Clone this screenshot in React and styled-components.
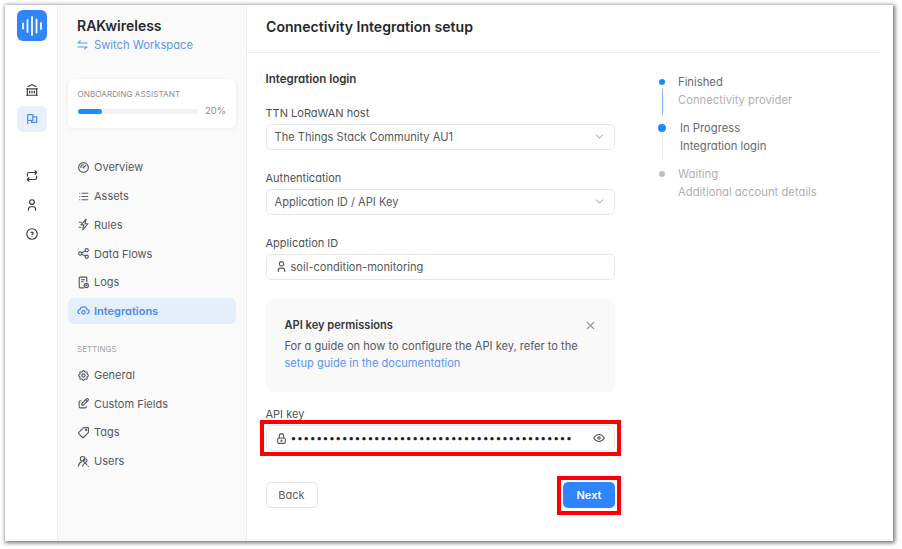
import styled, { createGlobalStyle } from "styled-components";
import {
  TbBuildingBank,
  TbRepeat,
  TbUser,
  TbHelpCircle,
  TbGauge,
  TbList,
  TbShare,
  TbSettings,
  TbEdit,
  TbChevronDown,
  TbLock,
  TbEye,
  TbX,
} from "react-icons/tb";

const GlobalStyle = createGlobalStyle`
  html, body {
    margin: 0;
    background: #fff;
    font-family: Inter, "Liberation Sans", sans-serif;
    font-feature-settings: "cv11" 1;
  }
  * { box-sizing: border-box; }
`;

const Page = styled.div`
  width: 902px;
  height: 549px;
  padding: 5px 0 0 5px;
  overflow: hidden;
`;

const Frame = styled.div`
  display: flex;
  width: 888px;
  height: 536px;
  background: #fff;
  box-shadow: 1px 1px 4px 1px rgba(0, 0, 0, 0.55);
`;

const Rail = styled.nav`
  display: flex;
  flex-direction: column;
  align-items: center;
  width: 53px;
  padding: 5px 0 0 1px;
  border-right: 1px solid #ededed;
`;

const Logo = styled.div`
  display: flex;
  align-items: center;
  justify-content: center;
  width: 30px;
  height: 31px;
  margin-bottom: 36px;
  border-radius: 6px;
  background: #2f84ff;
`;

const RailButton = styled.div`
  display: flex;
  align-items: center;
  justify-content: center;
  width: 30px;
  height: 26px;
  margin-bottom: ${(p) => p.$gap || 3}px;
  border-radius: 6px;
  color: ${(p) => (p.$active ? "#4a8cf7" : "#3c3c3c")};
  background: ${(p) => (p.$active ? "#e8f0fe" : "transparent")};
`;

const Sidebar = styled.aside`
  display: flex;
  flex-direction: column;
  width: 189px;
  padding: 0 10px 0 9.5px;
  background: #fafafa;
  border-right: 1px solid #ededed;
`;

const Workspace = styled.div`
  padding: 11px 0 0 9.5px;
  height: 74px;
`;

const WorkspaceName = styled.div`
  font-size: 14px;
  line-height: 19px;
  font-weight: 600;
  color: #26282c;
`;

const WorkspaceSwitch = styled.div`
  display: flex;
  align-items: center;
  gap: 6px;
  margin-top: 1px;
  font-size: 11.2px;
  line-height: 18px;
  color: #5a96f8;
`;

const AssistantCard = styled.div`
  height: 49px;
  margin-bottom: 26.6px;
  padding: 10px;
  border-radius: 6px;
  background: #fff;
  box-shadow: 0 1px 4px rgba(0, 0, 0, 0.07);
`;

const AssistantLabel = styled.div`
  font-size: 8.2px;
  line-height: 11px;
  color: #8d8d8d;
`;

const ProgressRow = styled.div`
  display: flex;
  align-items: center;
  gap: 7px;
  margin-top: 4px;
  font-size: 9.5px;
  line-height: 14px;
  color: #8d8d8d;
`;

const ProgressTrack = styled.div`
  flex: 1;
  height: 5px;
  border-radius: 3px;
  background: #f2f2f2;
`;

const ProgressFill = styled.div`
  height: 100%;
  border-radius: 3px;
  background: #1a8cff;
`;

const NavList = styled.div`
  display: flex;
  flex-direction: column;
  gap: 3px;
`;

const NavItem = styled.div`
  display: flex;
  align-items: center;
  gap: 4.5px;
  height: 25.7px;
  padding-left: 9px;
  border-radius: 6px;
  font-size: 11px;
  font-weight: ${(p) => (p.$active ? 600 : 400)};
  color: ${(p) => (p.$active ? "#4a8cf7" : "#55585e")};
  background: ${(p) => (p.$active ? "#e5eefb" : "transparent")};
`;

const NavHeading = styled.div`
  margin: 20px 0 7.5px;
  padding-left: 9.5px;
  font-size: 8px;
  line-height: 11px;
  color: #a3a3a3;
`;

const Main = styled.main`
  flex: 1;
  display: flex;
  flex-direction: column;
  min-width: 0;
`;

const Header = styled.header`
  display: flex;
  align-items: center;
  height: 48px;
  margin-right: 12px;
  padding: 0 0 5px 19px;
  border-bottom: 1px solid #ececec;
`;

const Title = styled.h1`
  margin: 0;
  font-size: 14.1px;
  font-weight: 600;
  color: #26282c;
`;

const Body = styled.div`
  display: flex;
  padding-left: 18.5px;
`;

const Form = styled.form`
  width: 349.5px;
  padding-top: 17px;
`;

const SectionTitle = styled.h2`
  margin: 0 0 15.5px;
  font-size: 11.5px;
  line-height: 18px;
  font-weight: 600;
  color: #33363b;
`;

const Field = styled.div`
  margin-bottom: ${(p) => p.$gap ?? 19.2}px;
`;

const Label = styled.label`
  display: block;
  margin-bottom: 2px;
  font-size: 11px;
  line-height: 18px;
  color: #4f5257;
`;

const Control = styled.div`
  position: relative;
  display: flex;
  align-items: center;
  gap: 3px;
  height: 26px;
  padding: 0 8px;
  border: 1px solid #e8e8e8;
  border-radius: 5px;
  background: #fff;
  font-size: 11.1px;
  color: #55585e;
`;

// red annotation drawn over the screenshot
const Flagged = styled.span`
  position: absolute;
  inset: ${(p) => p.$inset};
  border: 4.5px solid #f00;
  pointer-events: none;
`;

const ControlText = styled.span`
  flex: 1;
  white-space: nowrap;
`;

const Dots = styled(ControlText)`
  font-size: 10.5px;
  letter-spacing: 0.5px;
  color: #1f2124;
`;

const InfoBox = styled.section`
  height: 93px;
  margin-bottom: 13px;
  padding: 17px 18px 0 19px;
  border-radius: 6px;
  background: #f9f9f9;
`;

const InfoHead = styled.div`
  display: flex;
  align-items: center;
  justify-content: space-between;
  height: 18px;
  margin-bottom: 4px;
  font-size: 11.1px;
  font-weight: 600;
  color: #33363b;
`;

const InfoText = styled.p`
  margin: 0;
  font-size: 11.1px;
  line-height: 17.3px;
  color: #55585e;
`;

const DocLink = styled.a`
  color: #5a96f8;
`;

const Actions = styled.div`
  display: flex;
  justify-content: space-between;
  margin-top: 31px;
`;

const BackButton = styled.button`
  width: 52px;
  height: 26px;
  padding: 0;
  border: 1px solid #e4e4e4;
  border-radius: 5px;
  background: #fff;
  font: inherit;
  font-size: 11px;
  font-feature-settings: inherit;
  color: #5f6266;
`;

const NextButton = styled.button`
  position: relative;
  width: 52px;
  height: 26px;
  padding: 0;
  border: 0;
  border-radius: 5px;
  background: #2f84ff;
  font: inherit;
  font-size: 11px;
  font-weight: 600;
  font-feature-settings: inherit;
  color: #fff;
`;

const Steps = styled.ol`
  display: flex;
  flex-direction: column;
  margin: 20px 0 0 43px;
  padding: 0;
  list-style: none;
`;

const Step = styled.li`
  display: flex;
  gap: ${(p) => (p.$current ? 14 : 12)}px;
  height: 46.2px;
`;

const StepTrack = styled.div`
  display: flex;
  flex-direction: column;
  align-items: center;
  width: 8px;
`;

const StepDot = styled.span`
  flex: none;
  width: ${(p) => (p.$large ? 8 : 6)}px;
  height: ${(p) => (p.$large ? 8 : 6)}px;
  margin: ${(p) => (p.$large ? "5px 0 3px" : "6px 0 4px")};
  border-radius: 50%;
  background: ${(p) => p.$color};
`;

const StepLine = styled.span`
  width: 1px;
  height: 26px;
  background: ${(p) => p.$color};
`;

const StepText = styled.div`
  font-size: 11.25px;
  line-height: 18px;
  color: ${(p) => p.$color};
`;

const StepSub = styled.div`
  color: ${(p) => p.$color};
`;

const WaveIcon = () => (
  <svg width="22" height="20" viewBox="0 0 22 20" fill="none" stroke="#fff" strokeWidth="1.8" strokeLinecap="round">
    <path d="M2 7.5v5M6.5 4v12M11 1v18M15.5 3.5v13M20 7v6" />
  </svg>
);

const SwitchIcon = () => (
  <svg width="11" height="10" viewBox="0 0 11 10" fill="none" stroke="currentColor" strokeWidth="1.1" strokeLinecap="round" strokeLinejoin="round">
    <path d="M10 3H1l2.4-2.2M1 7h9L7.6 9.2" />
  </svg>
);

const FlagsIcon = () => (
  <svg width="12" height="12" viewBox="0 0 14 14" fill="none" stroke="currentColor" strokeWidth="1.4" strokeLinejoin="round">
    <path d="M2 13V2h6v6.5H2" />
    <path d="M8 4.5h4.5v6.5H6.5V8.5" />
  </svg>
);

const CloudIcon = () => (
  <svg width="13" height="13" viewBox="0 0 14 14" fill="none" stroke="currentColor" strokeWidth="1.3">
    <path d="M3.5 10.5C1.8 10.5 1 9.3 1 8.2 1 7 2 6 3.2 6 3.5 4 5 3 7 3c2 0 3.5 1 3.8 3C12 6 13 7 13 8.2c0 1.1-.8 2.3-2.5 2.3" />
    <circle cx="7" cy="9" r="1.8" />
  </svg>
);

const LogsIcon = () => (
  <svg width="13" height="13" viewBox="0 0 14 14" fill="none" stroke="currentColor" strokeWidth="1.2" strokeLinecap="round">
    <path d="M7 12.8H3.4c-.6 0-1-.4-1-1V2.2c0-.6.4-1 1-1h6.2c.6 0 1 .4 1 1v4" />
    <path d="M4.8 4h3.4M4.8 6.2h2" />
    <circle cx="10" cy="10.2" r="2.3" />
    <circle cx="10" cy="10.2" r=".5" />
  </svg>
);

const BoltIcon = () => (
  <svg width="13" height="13" viewBox="0 0 14 14" fill="none" stroke="currentColor" strokeWidth="1.2" strokeLinejoin="round" strokeLinecap="round">
    <path d="M9.8 1.2 4.2 7.4h3.2L6.2 12.8l5.6-6.6H8.6z" />
    <path d="M2.6 4.6h2M2.2 10h2" />
  </svg>
);

const TagIcon = () => (
  <svg width="13" height="13" viewBox="0 0 14 14" fill="none" stroke="currentColor" strokeWidth="1.25" strokeLinejoin="round">
    <path d="M7.6 1.8h4c.4 0 .7.3.7.7v4c0 .4-.1.7-.4 1l-4.6 4.6c-.5.5-1.2.5-1.7 0L2 8.5c-.5-.5-.5-1.2 0-1.7l4.6-4.6c.3-.3.6-.4 1-.4z" />
    <circle cx="9.8" cy="4.3" r=".6" />
  </svg>
);

const UsersIcon = () => (
  <svg width="13" height="13" viewBox="0 0 14 14" fill="none" stroke="currentColor" strokeWidth="1.2" strokeLinecap="round">
    <circle cx="6" cy="4" r="2.4" />
    <circle cx="8.8" cy="6" r="2" />
    <path d="M1.5 12c.4-2.6 1.8-4.2 3.4-4.6M6 12c.3-1.6 1.2-2.8 2.6-3.2 1.2.3 1.9 1 2.2 2" />
    <path d="M12.2 12.4h.1" />
  </svg>
);

const mainNav = [
  { label: "Overview", icon: <TbGauge size={13} /> },
  { label: "Assets", icon: <TbList size={13} /> },
  { label: "Rules", icon: <BoltIcon /> },
  { label: "Data Flows", icon: <TbShare size={13} /> },
  { label: "Logs", icon: <LogsIcon /> },
  { label: "Integrations", icon: <CloudIcon />, active: true },
];

const settingsNav = [
  { label: "General", icon: <TbSettings size={13} /> },
  { label: "Custom Fields", icon: <TbEdit size={13} /> },
  { label: "Tags", icon: <TagIcon /> },
  { label: "Users", icon: <UsersIcon /> },
];

const steps = [
  { title: "Finished", sub: "Connectivity provider", dot: "#1a8cff", line: "#7db8f7", titleColor: "#66696e", subColor: "#b0b0b0" },
  { title: "In Progress", sub: "Integration login", dot: "#1a8cff", line: "#efefef", titleColor: "#66696e", subColor: "#66696e", large: true },
  { title: "Waiting", sub: "Additional account details", dot: "#bdbdbd", titleColor: "#b0b0b0", subColor: "#b0b0b0" },
];

const App = () => {
  return (
    <Page>
      <GlobalStyle />
      <Frame>
        <Rail>
          <Logo><WaveIcon /></Logo>
          <RailButton><TbBuildingBank size={14} /></RailButton>
          <RailButton $active $gap={31}><FlagsIcon /></RailButton>
          <RailButton><TbRepeat size={14} /></RailButton>
          <RailButton><TbUser size={14} /></RailButton>
          <RailButton><TbHelpCircle size={14} /></RailButton>
        </Rail>

        <Sidebar>
          <Workspace>
            <WorkspaceName>RAKwireless</WorkspaceName>
            <WorkspaceSwitch><SwitchIcon />Switch Workspace</WorkspaceSwitch>
          </Workspace>
          <AssistantCard>
            <AssistantLabel>ONBOARDING ASSISTANT</AssistantLabel>
            <ProgressRow>
              <ProgressTrack><ProgressFill style={{ width: "20%" }} /></ProgressTrack>
              20%
            </ProgressRow>
          </AssistantCard>
          <NavList>
            {mainNav.map((item) => (
              <NavItem key={item.label} $active={item.active}>{item.icon}{item.label}</NavItem>
            ))}
          </NavList>
          <NavHeading>SETTINGS</NavHeading>
          <NavList>
            {settingsNav.map((item) => (
              <NavItem key={item.label}>{item.icon}{item.label}</NavItem>
            ))}
          </NavList>
        </Sidebar>

        <Main>
          <Header><Title>Connectivity Integration setup</Title></Header>
          <Body>
            <Form>
              <SectionTitle>Integration login</SectionTitle>
              <Field>
                <Label>TTN LoRaWAN host</Label>
                <Control>
                  <ControlText>The Things Stack Community AU1</ControlText>
                  <TbChevronDown size={13} color="#bbb" />
                </Control>
              </Field>
              <Field>
                <Label>Authentication</Label>
                <Control>
                  <ControlText>Application ID / API Key</ControlText>
                  <TbChevronDown size={13} color="#bbb" />
                </Control>
              </Field>
              <Field>
                <Label>Application ID</Label>
                <Control>
                  <TbUser size={13} />
                  <ControlText>soil-condition-monitoring</ControlText>
                </Control>
              </Field>
              <InfoBox>
                <InfoHead>API key permissions<TbX size={13} color="#999" /></InfoHead>
                <InfoText>
                  For a guide on how to configure the API key, refer to the
                  <br />
                  <DocLink>setup guide in the documentation</DocLink>
                </InfoText>
              </InfoBox>
              <Field $gap={0}>
                <Label>API key</Label>
                <Control>
                  <TbLock size={13} />
                  <Dots>{"•".repeat(44)}</Dots>
                  <TbEye size={14} />
                  <Flagged $inset="-6.5px -6.5px -5.5px -6.5px" />
                </Control>
              </Field>
              <Actions>
                <BackButton type="button">Back</BackButton>
                <NextButton type="button">
                  Next
                  <Flagged $inset="-6px -6px -7px -6px" />
                </NextButton>
              </Actions>
            </Form>
            <Steps>
              {steps.map((step) => (
                <Step key={step.title} $current={step.large}>
                  <StepTrack>
                    <StepDot $color={step.dot} $large={step.large} />
                    {step.line && <StepLine $color={step.line} />}
                  </StepTrack>
                  <StepText $color={step.titleColor}>
                    {step.title}
                    <StepSub $color={step.subColor}>{step.sub}</StepSub>
                  </StepText>
                </Step>
              ))}
            </Steps>
          </Body>
        </Main>
      </Frame>
    </Page>
  );
};

export default App;
